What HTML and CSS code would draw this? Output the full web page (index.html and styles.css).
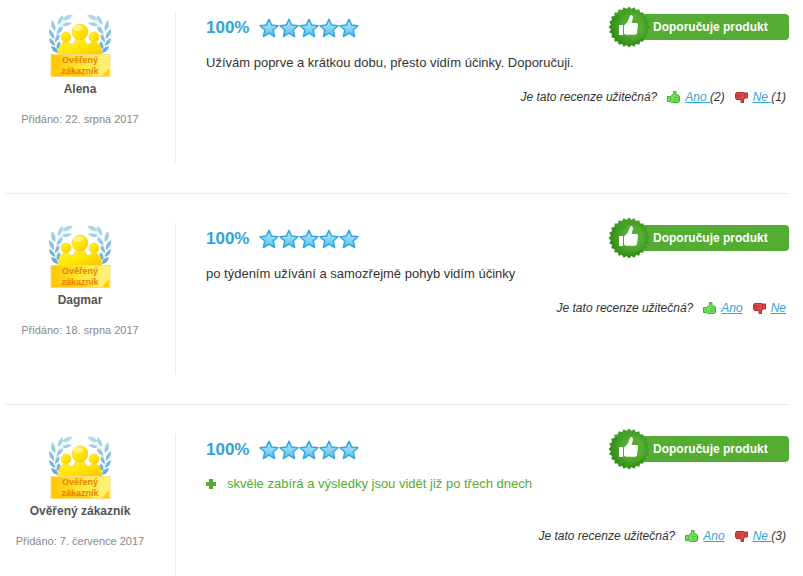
FILE: index.html
```html
<!DOCTYPE html>
<html lang="cs">
<head>
  <meta charset="UTF-8">
  <title>Recenze produktu</title>
  <link rel="stylesheet" href="styles.css">
</head>
<body>

<svg class="sprite" aria-hidden="true">
  <defs>
    <linearGradient id="star-fill" x1="0" y1="0" x2="0" y2="1">
      <stop offset="0" stop-color="#c3eafa"/>
      <stop offset="1" stop-color="#52c1ee"/>
    </linearGradient>
    <radialGradient id="seal-fill" gradientUnits="userSpaceOnUse" cx="21" cy="17" r="24">
      <stop offset="0.4" stop-color="#54ac32"/>
      <stop offset="1" stop-color="#2c8813"/>
    </radialGradient>
    <linearGradient id="gold" x1="0" y1="0" x2="1" y2="1">
      <stop offset="0" stop-color="#fff23a"/>
      <stop offset="0.5" stop-color="#ffe600"/>
      <stop offset="1" stop-color="#fbc400"/>
    </linearGradient>
    <linearGradient id="leaf-fill" gradientUnits="userSpaceOnUse" x1="0" y1="0" x2="0" y2="38">
      <stop offset="0" stop-color="#b4dcec"/>
      <stop offset="1" stop-color="#62a9d3"/>
    </linearGradient>
    <linearGradient id="plate" x1="0" y1="0" x2="1" y2="0">
      <stop offset="0" stop-color="#ffc400"/>
      <stop offset="0.45" stop-color="#ffe52e"/>
      <stop offset="1" stop-color="#fff380"/>
    </linearGradient>
    <g id="branch">
      <path d="M21 4C11 8 4 19 8 37" fill="none" stroke="#c3e1ee"/>
      <g fill="url(#leaf-fill)">
        <path d="M13 6Q16 0 24 1Q21 6 13 6z"/>
        <path d="M13 11Q17 7 23 9Q18 14 13 11z"/>
        <path d="M9 11Q8 4 14 1Q15 7 9 11z"/>
        <path d="M8 20Q8 14 14 12Q14 18 8 20z"/>
        <path d="M6 17Q0 13 3 6Q8 11 6 17z"/>
        <path d="M5 25Q-1 21 0 15Q6 18 5 25z"/>
        <path d="M6 28Q6 22 10 20Q12 25 6 28z"/>
        <path d="M6 32Q0 30 0 24Q6 26 6 32z"/>
        <path d="M8 35Q7 30 10 27Q14 32 8 35z"/>
        <path d="M9 39Q3 38 2 32Q9 33 9 39z"/>
      </g>
    </g>
  </defs>

  <symbol id="star" viewBox="0 0 20 20">
    <path d="M10 1.2l2.6 5.9 6.4.6-4.8 4.3 1.4 6.5L10 15.1l-5.6 3.4 1.4-6.5L1 7.7l6.4-.6z" fill="url(#star-fill)" stroke="#34a8dd" stroke-width="1.5" stroke-linejoin="round"/>
  </symbol>

  <symbol id="seal" viewBox="0 0 42 42">
    <g fill="url(#seal-fill)">
      <rect id="tooth" x="6.5" y="6.5" width="29" height="29"/>
      <use href="#tooth" transform="rotate(15 21 21)"/>
      <use href="#tooth" transform="rotate(30 21 21)"/>
      <use href="#tooth" transform="rotate(45 21 21)"/>
      <use href="#tooth" transform="rotate(60 21 21)"/>
      <use href="#tooth" transform="rotate(75 21 21)"/>
    </g>
    <path d="M11 19h4v10h-4zM16 19.5l3.5-3.5 2.5-6q.5-1.7 2-.8 1.5 1 .8 3.3L23.5 17h5q1.6 0 1.5 1.8l-1 8.200q-.3 1.8-2 1.8H18l-2-1z" fill="#fff"/>
  </symbol>

  <symbol id="thumb-up" viewBox="0 0 13 13">
    <path d="M.5 5.5h3L6.5 3V.5h2.500v3.500h2.500l1 1.500v5l-1 1h-7l-1-1h-3z" fill="#74dc5c" stroke="#3cb52a"/>
    <path d="M3.5 6v4M7 6.5h5M7 9h5" stroke="#4fc63c"/>
  </symbol>

  <symbol id="thumb-down" viewBox="0 0 13 13">
    <path d="M1.5 1.5h7l1 .5h3v5h-3L8.5 9v2.500H6V8.500H1.500l-1-1.500V3z" fill="#d64a4a" stroke="#b52a2a"/>
    <path d="M9.5 2v5M1 4h5M1 6h5" stroke="#b83434"/>
  </symbol>

  <symbol id="award" viewBox="0 0 62 64">
    <use href="#branch"/>
    <use href="#branch" transform="matrix(-1 0 0 1 62 0)"/>
    <g fill="url(#gold)" stroke="#f4cf35" stroke-width=".6">
      <path d="M9 41q0-11 6-13h3q3 1 5 3 3-3 4-6h8q1 3 4 6 2-2 5-3h3q6 2 6 13z"/>
      <circle cx="17" cy="23" r="5"/>
      <circle cx="45" cy="23" r="5"/>
      <circle cx="31" cy="18" r="8"/>
    </g>
    <ellipse cx="29" cy="14" rx="5" ry="3" fill="#fff9a5" opacity=".7"/>
    <rect x="2" y="40.5" width="59" height="22" fill="url(#plate)" stroke="#f8d981"/>
    <path d="M3 62l17-8 25 8z" fill="#ffbf00" opacity=".7"/>
    <path d="M53 62l7-8v8z" fill="#ffd000"/>
  </symbol>
</svg>

<main class="reviews">

  <article class="review">
    <div class="author">
      <svg class="award"><use href="#award"/><text x="31" y="49">Ověřený</text><text x="31" y="60">zákazník</text></svg>
      <strong class="name">Alena</strong>
      <span class="date">Přidáno: 22. srpna 2017</span>
    </div>
    <div class="content">
      <div class="head">
        <span class="percent">100%</span>
        <span class="stars" role="img" aria-label="5 z 5">
          <svg><use href="#star"/></svg><svg><use href="#star"/></svg><svg><use href="#star"/></svg><svg><use href="#star"/></svg><svg><use href="#star"/></svg>
        </span>
        <span class="recommend"><svg class="seal"><use href="#seal"/></svg>Doporučuje produkt</span>
      </div>
      <p class="text">Užívám poprve a krátkou dobu, přesto vidím účinky. Doporučuji.</p>
      <div class="useful">
        <span>Je tato recenze užitečná?</span>
        <span class="vote"><svg><use href="#thumb-up"/></svg><span><a href="#">Ano </a>(2)</span></span>
        <span class="vote"><svg><use href="#thumb-down"/></svg><span><a href="#">Ne </a>(1)</span></span>
      </div>
    </div>
  </article>

  <article class="review">
    <div class="author">
      <svg class="award"><use href="#award"/><text x="31" y="49">Ověřený</text><text x="31" y="60">zákazník</text></svg>
      <strong class="name">Dagmar</strong>
      <span class="date">Přidáno: 18. srpna 2017</span>
    </div>
    <div class="content">
      <div class="head">
        <span class="percent">100%</span>
        <span class="stars" role="img" aria-label="5 z 5">
          <svg><use href="#star"/></svg><svg><use href="#star"/></svg><svg><use href="#star"/></svg><svg><use href="#star"/></svg><svg><use href="#star"/></svg>
        </span>
        <span class="recommend"><svg class="seal"><use href="#seal"/></svg>Doporučuje produkt</span>
      </div>
      <p class="text">po týdením užívání a samozřejmě pohyb vidím účinky</p>
      <div class="useful">
        <span>Je tato recenze užitečná?</span>
        <span class="vote"><svg><use href="#thumb-up"/></svg><a href="#">Ano</a></span>
        <span class="vote"><svg><use href="#thumb-down"/></svg><a href="#">Ne</a></span>
      </div>
    </div>
  </article>

  <article class="review">
    <div class="author">
      <svg class="award"><use href="#award"/><text x="31" y="49">Ověřený</text><text x="31" y="60">zákazník</text></svg>
      <strong class="name">Ověřený zákazník</strong>
      <span class="date">Přidáno: 7. července 2017</span>
    </div>
    <div class="content">
      <div class="head">
        <span class="percent">100%</span>
        <span class="stars" role="img" aria-label="5 z 5">
          <svg><use href="#star"/></svg><svg><use href="#star"/></svg><svg><use href="#star"/></svg><svg><use href="#star"/></svg><svg><use href="#star"/></svg>
        </span>
        <span class="recommend"><svg class="seal"><use href="#seal"/></svg>Doporučuje produkt</span>
      </div>
      <ul class="pros">
        <li><svg viewBox="0 0 10 10"><path d="M3 0h4v3h3v4H7v3H3V7H0V3h3z"/></svg>skvěle zabírá a výsledky jsou vidět již po třech dnech</li>
      </ul>
      <div class="useful">
        <span>Je tato recenze užitečná?</span>
        <span class="vote"><svg><use href="#thumb-up"/></svg><a href="#">Ano</a></span>
        <span class="vote"><svg><use href="#thumb-down"/></svg><span><a href="#">Ne </a>(3)</span></span>
      </div>
    </div>
  </article>

</main>

</body>
</html>
```
FILE: styles.css
```css
body {
  margin: 0;
  background: #fff;
  color: #333;
  font-family: "Liberation Sans", Arial, sans-serif;
  font-size: 13px;
  line-height: 18px;
}

.sprite {
  position: absolute;
  width: 0;
  height: 0;
}

.reviews {
  padding: 12px 13px 0 5px;
}

.review {
  display: flex;
  gap: 20px;
  padding-bottom: 30px;
  margin-bottom: 29px;
  border-bottom: 1px solid #ececec;
}

.review:last-child {
  padding-bottom: 0;
  margin-bottom: 0;
  border-bottom: 0;
}

/* left column */
.author {
  flex: 0 0 150px;
  display: flex;
  flex-direction: column;
  align-items: center;
  padding-top: 2px;
}

.award {
  width: 62px;
  height: 64px;
}

.award text {
  font-size: 9px;
  font-weight: bold;
  text-anchor: middle;
  fill: #ea8200;
}

.name {
  color: #555;
  font-size: 12px;
  margin-top: 2px;
}

.date {
  color: #888;
  font-size: 11px;
  margin-top: 12px;
}

/* right column */
.content {
  flex: 1;
  min-height: 151px;
  box-sizing: border-box;
  border-left: 1px solid #ececec;
  padding: 2px 0 0 30px;
}

.head {
  display: flex;
  align-items: center;
  height: 28px;
}

.percent {
  color: #31a3d3;
  font-size: 17px;
  font-weight: bold;
  width: 53px;
}

.stars {
  display: flex;
}

.stars svg {
  width: 20px;
  height: 20px;
}

.recommend {
  position: relative;
  width: 136px;
  margin: 0 1px 2px auto;
  padding-left: 24px;
  border-radius: 4px;
  background: #54ac32;
  color: #fff;
  font-size: 12px;
  font-weight: bold;
  line-height: 26px;
}

.seal {
  position: absolute;
  left: -21px;
  top: -8px;
  width: 42px;
  height: 42px;
}

.text {
  margin: 12px 0 16px;
}

.pros {
  list-style: none;
  margin: 11px 0 34px;
  padding: 0;
  color: #54ac32;
}

.pros li {
  display: flex;
  align-items: center;
  gap: 11px;
}

.pros svg {
  width: 10px;
  height: 10px;
  fill: #54ac32;
}

.useful {
  display: flex;
  justify-content: flex-end;
  gap: 10px;
  padding-right: 4px;
  font-size: 12px;
  font-style: italic;
}

.vote {
  display: flex;
  align-items: center;
  gap: 5px;
}

.vote svg {
  width: 13px;
  height: 13px;
}

a {
  color: #31a3d3;
}
```
